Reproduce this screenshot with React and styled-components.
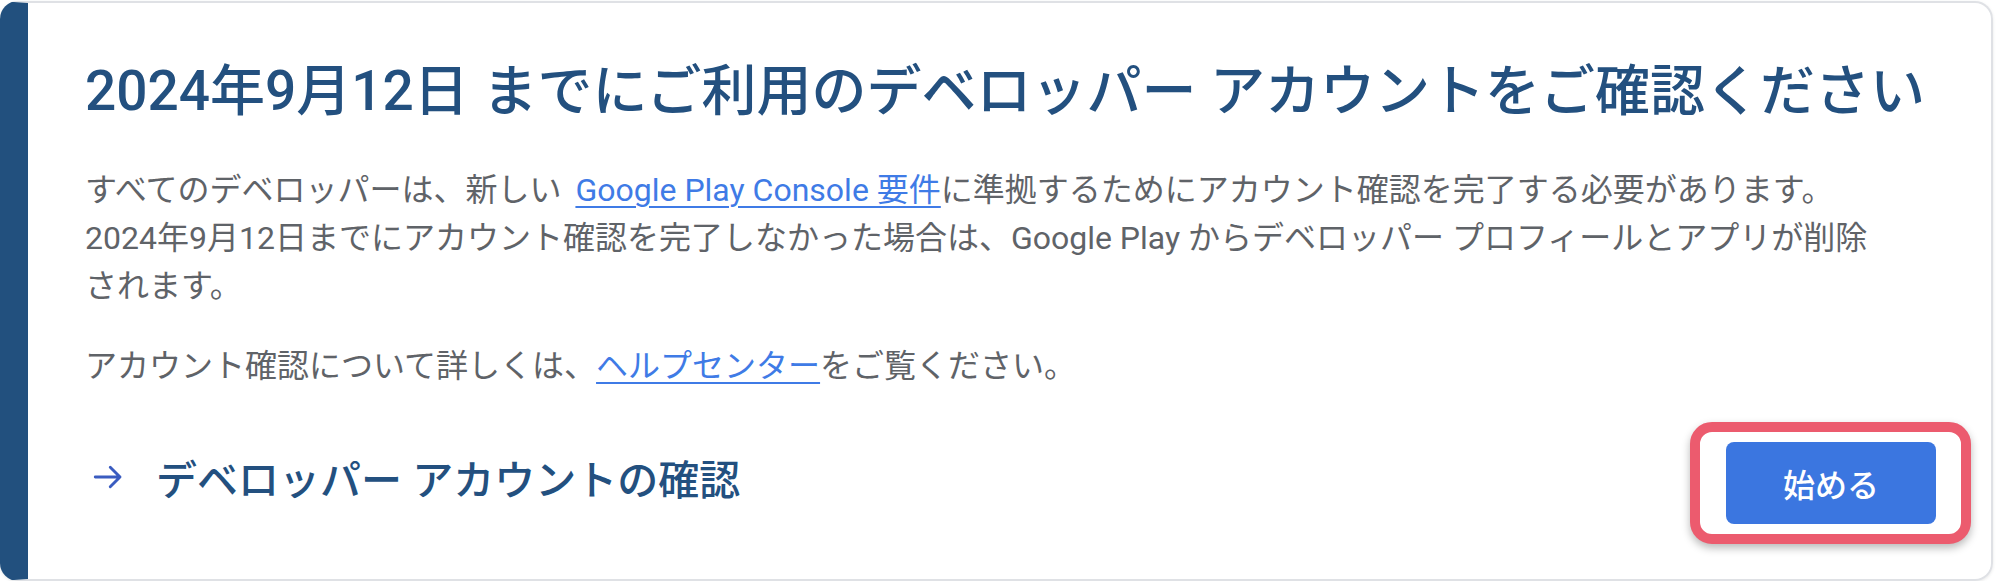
import styled, { createGlobalStyle } from "styled-components";

const GlobalStyle = createGlobalStyle`
  body {
    margin: 0;
    background: #ffffff;
    font-family: Roboto, "Noto Sans CJK JP", sans-serif;
  }
`;

const ArrowIcon = () => (
  <svg width="36" height="36" viewBox="0 0 24 24" fill="none">
    <path
      d="M3.5 12h16.5M13.5 5.5 20 12l-6.5 6.5"
      stroke="#3a5cc0"
      strokeWidth="1.9"
      strokeLinecap="round"
      strokeLinejoin="round"
    />
  </svg>
);

const App = () => {
  return (
    <>
      <GlobalStyle />
      <Card>
        <Title>2024年9月12日 までにご利用のデベロッパー アカウントをご確認ください</Title>
        <Body>
          <Para>
            すべてのデベロッパーは、新しい{" "}
            <TextLink href="#" $gap>Google Play Console 要件</TextLink>
            に準拠するためにアカウント確認を完了する必要があります。
            <br />
            2024年9月12日までにアカウント確認を完了しなかった場合は、Google Play からデベロッパー プロフィールとアプリが削除
            <br />
            されます。
          </Para>
          <Para>
            アカウント確認について詳しくは、
            <TextLink href="#">ヘルプセンター</TextLink>
            をご覧ください。
          </Para>
        </Body>
        <Footer>
          <ActionLink>
            <ArrowIcon />
            <span>デベロッパー アカウントの確認</span>
          </ActionLink>
          <Highlight>
            <StartButton>始める</StartButton>
          </Highlight>
        </Footer>
      </Card>
    </>
  );
};

const Card = styled.div`
  box-sizing: border-box;
  width: 1993px;
  height: 580px;
  margin-top: 1px;
  border: 2px solid #dfe1e5;
  border-left: 28px solid #22507e;
  border-radius: 18px;
  padding: 52px 20px 33px 57px;
  display: flex;
  flex-direction: column;
  box-shadow: 0 1px 3px rgba(60, 64, 67, 0.12);
`;

const Title = styled.h1`
  margin: 0;
  font-size: 55px;
  line-height: 72px;
  font-weight: 500;
  color: #23507f;
  white-space: nowrap;
`;

const Body = styled.div`
  margin-top: 39px;
  font-size: 32px;
  line-height: 48px;
  color: #5f6368;
  white-space: nowrap;
`;

const Para = styled.p`
  margin: 0;

  & + & {
    margin-top: 32px;
  }
`;

const TextLink = styled.a`
  margin-left: ${(p) => (p.$gap ? "6px" : "0")};
  color: #3f7be6;
  text-decoration: underline;
  text-decoration-thickness: 2px;
  text-underline-offset: 5px;
`;

const Footer = styled.div`
  margin-top: 32px;
  display: flex;
  align-items: center;
  justify-content: space-between;
`;

const ActionLink = styled.div`
  display: flex;
  align-items: center;
  gap: 30px;
  padding-left: 5px;
  padding-bottom: 12px;
  font-size: 41px;
  font-weight: 500;
  color: #23507f;
`;

const Highlight = styled.div`
  box-sizing: border-box;
  display: flex;
  padding: 10px 25px 10px 26px;
  border: 10px solid #ec5b6e;
  border-radius: 22px;
  background: #ffffff;
  box-shadow: 0 4px 8px rgba(0, 0, 0, 0.28);
`;

const StartButton = styled.button`
  width: 210px;
  height: 82px;
  border: none;
  border-radius: 8px;
  background: #3b76e0;
  color: #ffffff;
  font-family: Roboto, "Noto Sans CJK JP", sans-serif;
  font-size: 32px;
  font-weight: 500;
  cursor: pointer;
`;

export default App;
